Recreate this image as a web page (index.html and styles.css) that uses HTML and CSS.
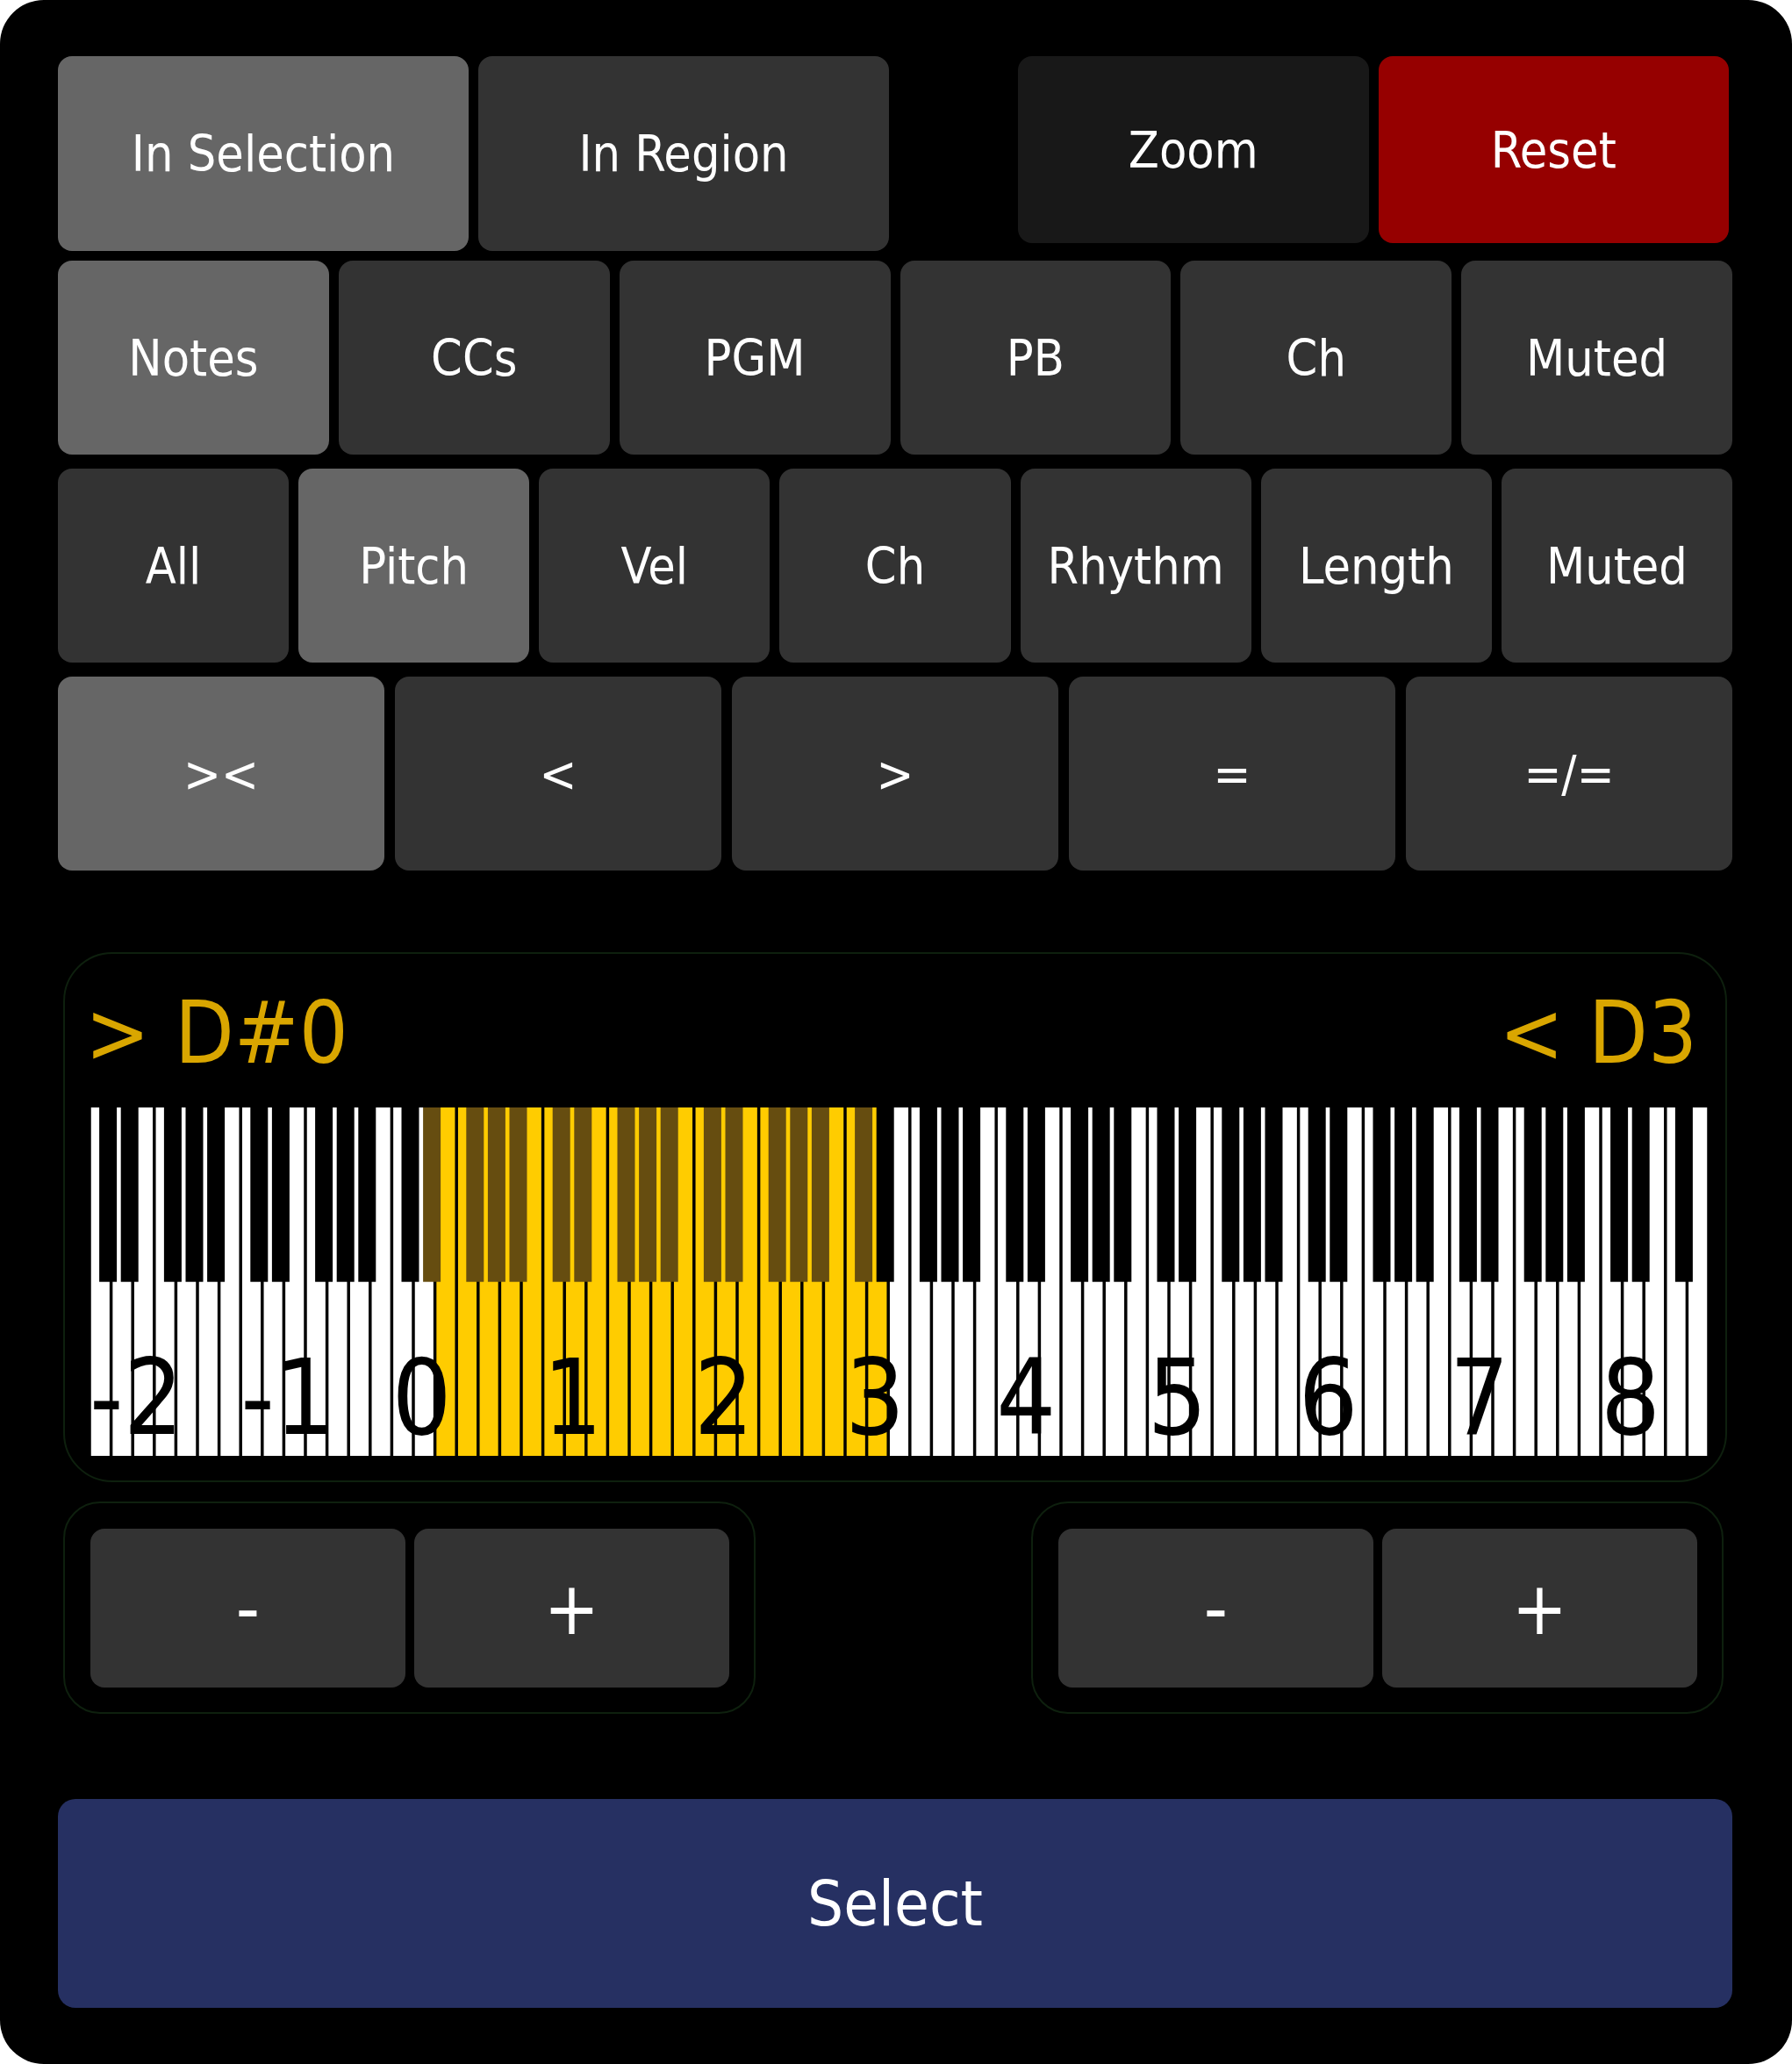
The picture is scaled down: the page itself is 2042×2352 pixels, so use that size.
FILE: index.html
```html
<!DOCTYPE html>
<html>
<head>
<meta charset="utf-8">
<title>Select</title>
<link rel="stylesheet" href="styles.css">
</head>
<body>
<div class="app">
  <div class="row row-top">
    <div class="group group-left">
      <div class="btn active">In Selection</div>
      <div class="btn">In Region</div>
    </div>
    <div class="group group-right">
      <div class="btn dark">Zoom</div>
      <div class="btn red">Reset</div>
    </div>
  </div>
  <div class="row row-6">
    <div class="btn active">Notes</div>
    <div class="btn">CCs</div>
    <div class="btn">PGM</div>
    <div class="btn">PB</div>
    <div class="btn">Ch</div>
    <div class="btn">Muted</div>
  </div>
  <div class="row row-7">
    <div class="btn">All</div>
    <div class="btn active">Pitch</div>
    <div class="btn">Vel</div>
    <div class="btn">Ch</div>
    <div class="btn">Rhythm</div>
    <div class="btn">Length</div>
    <div class="btn">Muted</div>
  </div>
  <div class="row row-5">
    <div class="btn active">&gt;&lt;</div>
    <div class="btn">&lt;</div>
    <div class="btn">&gt;</div>
    <div class="btn">=</div>
    <div class="btn">=/=</div>
  </div>

  <div class="piano-panel">
    <div class="range-labels">
      <span>&gt; D#0</span>
      <span>&lt; D3</span>
    </div>
    <div class="keyboard">
      <svg id="kb" class="kb-svg" width="1845" height="397" viewBox="0 0 1845 397" xmlns="http://www.w3.org/2000/svg"></svg>
    </div>
  </div>

  <div class="step-row">
    <div class="step-panel">
      <div class="btn step">-</div>
      <div class="btn step">+</div>
    </div>
    <div class="step-panel">
      <div class="btn step">-</div>
      <div class="btn step">+</div>
    </div>
  </div>

  <div class="select-btn">Select</div>
</div>
<script src="keyboard.js"></script>
</body>
</html>
```

FILE: styles.css
```css
html, body {
  margin: 0;
  padding: 0;
  background: #ffffff;
}

.app {
  width: 2042px;
  height: 2352px;
  box-sizing: border-box;
  background: #000000;
  border-radius: 50px;
  padding: 64px 68px 0 66px;
  font-family: "DejaVu Sans Condensed", "DejaVu Sans", sans-serif;
  font-stretch: semi-condensed;
  color: #ffffff;
  overflow: hidden;
}

.btn {
  display: flex;
  align-items: center;
  justify-content: center;
  background: #333333;
  border-radius: 16px;
  font-size: 57px;
  color: #ffffff;
  white-space: nowrap;
}

.btn.active {
  background: #666666;
}

.btn.dark {
  background: #181818;
}

.btn.red {
  background: #960000;
}

.row {
  display: grid;
  height: 221px;
}

.row-top {
  display: flex;
  justify-content: space-between;
  align-items: flex-start;
  height: 222px;
}

.group {
  display: grid;
  grid-template-columns: 1fr 1fr;
  column-gap: 11px;
}

.group-left {
  width: 947px;
  height: 222px;
}

.group-right {
  width: 810px;
  height: 213px;
  margin-right: 4px;
}

.row-6 {
  margin-top: 11px;
  grid-template-columns: repeat(6, 1fr);
  column-gap: 11px;
}

.row-7 {
  margin-top: 16px;
  grid-template-columns: repeat(7, 1fr);
  column-gap: 11px;
}

.row-5 {
  margin-top: 16px;
  grid-template-columns: repeat(5, 1fr);
  column-gap: 12px;
}

.piano-panel {
  margin-top: 93px;
  margin-left: 6px;
  width: 1896px;
  box-sizing: border-box;
  border: 2px solid #0e200e;
  border-radius: 56px;
  padding: 42px 19px 28px 28px;
}

.range-labels {
  display: flex;
  justify-content: space-between;
  font-size: 98px;
  line-height: 96px;
  height: 96px;
  color: #d9a600;
  margin-left: -5px;
  padding-right: 13px;
  white-space: pre;
}

.keyboard {
  margin-top: 37px;
  width: 1845px;
  height: 397px;
}

.kb-svg {
  display: block;
  overflow: visible;
}

.kb-svg .wk {
  fill: #ffffff;
}

.kb-svg .wk.on {
  fill: #ffcc00;
}

.kb-svg .bk {
  fill: #000000;
}

.kb-svg .bk.on {
  fill: #664d10;
}

.kb-svg .oct {
  font-family: "DejaVu Sans Condensed", "DejaVu Sans", sans-serif;
  font-stretch: semi-condensed;
  font-size: 119px;
  fill: #000000;
}

.step-row {
  margin-top: 22px;
  margin-left: 6px;
  width: 1892px;
  display: flex;
  justify-content: space-between;
}

.step-panel {
  width: 789px;
  height: 242px;
  box-sizing: border-box;
  border: 2px solid #0e200e;
  border-radius: 42px;
  padding: 29px 28px 28px 29px;
  display: grid;
  grid-template-columns: 1fr 1fr;
  column-gap: 10px;
}

.btn.step {
  font-size: 84px;
  border-radius: 16px;
}

.select-btn {
  margin-top: 97px;
  height: 238px;
  border-radius: 20px;
  background: #263062;
  display: flex;
  align-items: center;
  justify-content: center;
  font-size: 72px;
  color: #ffffff;
}
```

FILE: keyboard.js
```js
(function () {
  var NS = 'http://www.w3.org/2000/svg';
  var svg = document.getElementById('kb');
  if (!svg) return;
  var W = 24.6;
  var H = 397;
  var BH = 198.7;
  var BW = 20;
  var lo = 27; // D#0
  var hi = 62; // D3
  var isBlack = [0, 1, 0, 1, 0, 0, 1, 0, 1, 0, 1, 0];
  var whiteIdx = 0;
  var blacks = [];

  for (var n = 0; n < 128; n++) {
    var pc = n % 12;
    var on = n >= lo && n <= hi;
    if (!isBlack[pc]) {
      var r = document.createElementNS(NS, 'rect');
      r.setAttribute('x', (whiteIdx * W + 1.75).toFixed(2));
      r.setAttribute('y', '0');
      r.setAttribute('width', (W - 3.5).toFixed(2));
      r.setAttribute('height', String(H));
      r.setAttribute('class', on ? 'wk on' : 'wk');
      svg.appendChild(r);
      whiteIdx++;
    } else {
      blacks.push({ x: whiteIdx * W - 13.5, on: on });
    }
  }

  for (var i = 0; i < blacks.length; i++) {
    var b = document.createElementNS(NS, 'rect');
    b.setAttribute('x', blacks[i].x.toFixed(2));
    b.setAttribute('y', '0');
    b.setAttribute('width', String(BW));
    b.setAttribute('height', String(BH));
    b.setAttribute('class', blacks[i].on ? 'bk on' : 'bk');
    svg.appendChild(b);
  }

  for (var o = -2; o <= 8; o++) {
    var t = document.createElementNS(NS, 'text');
    t.setAttribute('x', ((o + 2) * 7 * W).toFixed(2));
    t.setAttribute('y', '372');
    t.setAttribute('class', 'oct');
    t.textContent = String(o);
    svg.appendChild(t);
  }
})();
```
